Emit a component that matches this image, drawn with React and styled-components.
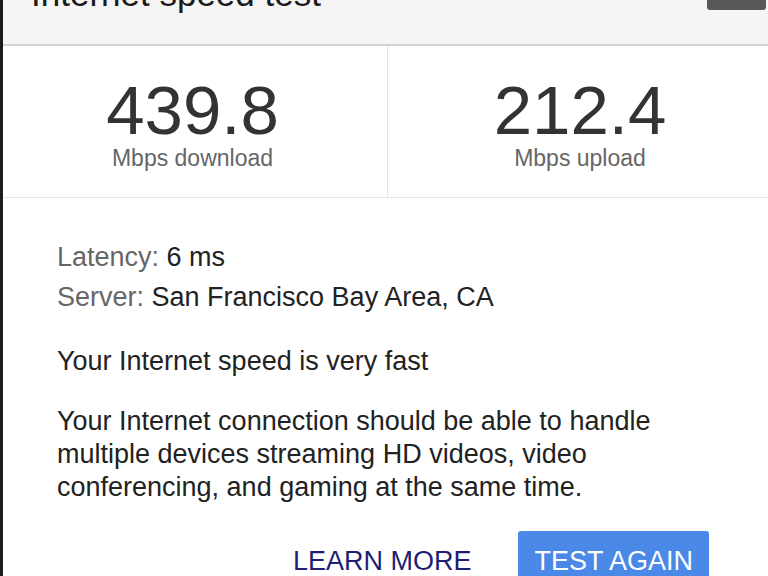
import React from "react";
import styled, { createGlobalStyle } from "styled-components";

const GlobalStyle = createGlobalStyle`
  html, body {
    margin: 0;
    padding: 0;
    background: #ffffff;
    overflow: hidden;
  }
  body {
    font-family: "Liberation Sans", Arial, sans-serif;
  }
`;

const Card = styled.div`
  position: relative;
  width: 768px;
  height: 576px;
  box-sizing: border-box;
  border-left: 3px solid #1c1c1c;
  background: #ffffff;
  overflow: hidden;
`;

const Header = styled.div`
  display: flex;
  align-items: flex-start;
  height: 44px;
  padding-left: 28px;
  background: #f5f5f5;
  border-bottom: 2px solid #d2d2d2;
`;

const Title = styled.h1`
  margin: -24px 0 0;
  font-size: 35px;
  line-height: 35px;
  font-weight: normal;
  color: #1a1a1a;
`;

const Badge = styled.div`
  position: absolute;
  top: -20px;
  right: 2px;
  width: 59px;
  height: 30px;
  border-radius: 3px;
  background: #585858;
  color: #fff;
  font-size: 14px;
  line-height: 26px;
  text-align: center;
`;

const Stats = styled.div`
  display: grid;
  grid-template-columns: 385px 1fr;
  height: 151px;
  border-bottom: 1px solid #e4e4e4;
`;

const Stat = styled.div`
  display: flex;
  flex-direction: column;
  align-items: center;
  padding-top: 30px;
  padding-right: ${(p) => (p.$divider ? "5px" : "0")};
  padding-left: ${(p) => (p.$divider ? "0" : "4px")};
  border-right: ${(p) => (p.$divider ? "1px solid #e6e6e6" : "none")};
`;

const Value = styled.div`
  font-size: 69px;
  line-height: 69px;
  color: #333;
`;

const Unit = styled.div`
  font-size: 23px;
  line-height: 26px;
  color: #666;
`;

const Info = styled.div`
  padding: 39px 0 0 54px;
  color: #222;
  font-size: 27px;
`;

const Line = styled.div`
  line-height: 40px;
`;

const Label = styled.span`
  color: #666;
`;

const Verdict = styled.div`
  margin-top: 24px;
  line-height: 40px;
`;

const Desc = styled.p`
  margin: 24px 0 0;
  width: 640px;
  line-height: 33px;
`;

const Actions = styled.div`
  display: flex;
  justify-content: flex-end;
  gap: 31px;
  margin-top: 27px;
  padding-right: 59px;
`;

const Button = styled.button`
  height: 61px;
  padding: 0 16px;
  border: none;
  border-radius: 3px;
  font-family: "Liberation Sans", Arial, sans-serif;
  font-size: 27px;
  text-transform: uppercase;
  background: ${(p) => (p.$primary ? "#4a89e8" : "transparent")};
  color: ${(p) => (p.$primary ? "#ffffff" : "#1d1f74")};
  cursor: pointer;
`;

export default function App() {
  return (
    <>
      <GlobalStyle />
      <Card>
        <Header>
          <Title>Internet speed test</Title>
        </Header>
        <Badge>17 of 18</Badge>
        <Stats>
          <Stat $divider>
            <Value>439.8</Value>
            <Unit>Mbps download</Unit>
          </Stat>
          <Stat>
            <Value>212.4</Value>
            <Unit>Mbps upload</Unit>
          </Stat>
        </Stats>
        <Info>
          <Line>
            <Label>Latency:</Label> 6 ms
          </Line>
          <Line>
            <Label>Server:</Label> San Francisco Bay Area, CA
          </Line>
          <Verdict>Your Internet speed is very fast</Verdict>
          <Desc>
            Your Internet connection should be able to handle multiple devices
            streaming HD videos, video conferencing, and gaming at the same time.
          </Desc>
          <Actions>
            <Button>Learn more</Button>
            <Button $primary>Test again</Button>
          </Actions>
        </Info>
      </Card>
    </>
  );
}
